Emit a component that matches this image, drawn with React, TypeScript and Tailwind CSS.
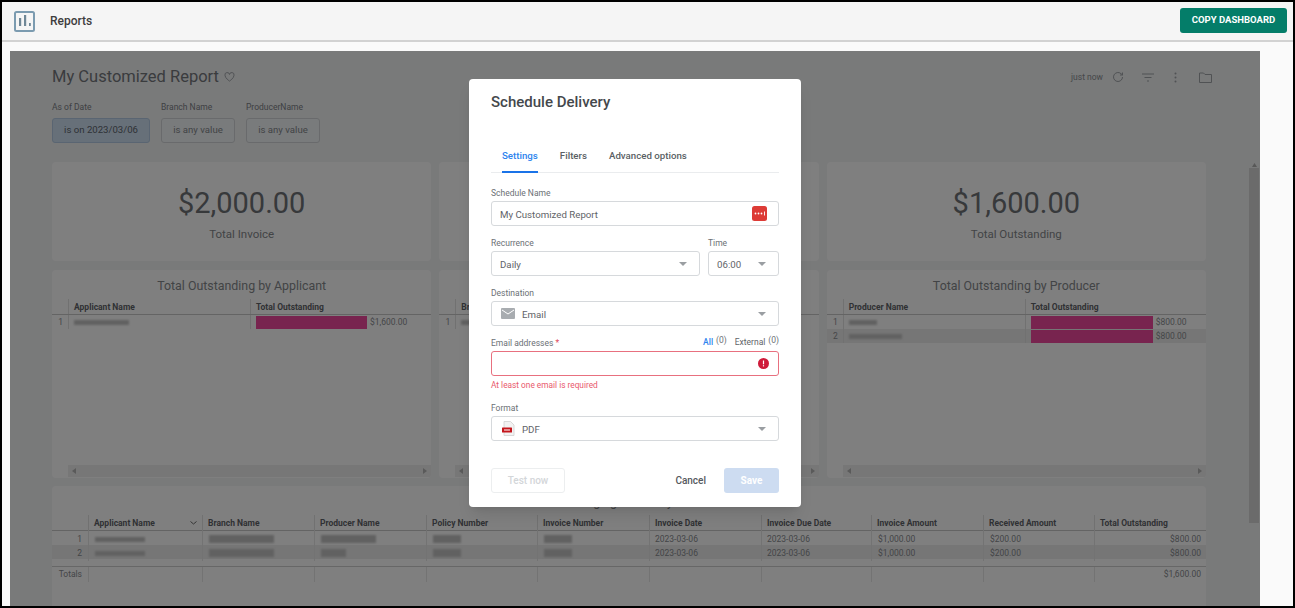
import React from "react";

const Caret = ({ className = "" }: { className?: string }) => (
  <svg width="8" height="4" viewBox="0 0 8 4" className={className}>
    <path d="M0 0h8L4 4z" fill="#9a9ea2" />
  </svg>
);

const Redacted = ({ w, h = 7 }: { w: number; h?: number }) => (
  <div className="bg-[#c2c2c2] blur-[1px]" style={{ width: w, height: h }} />
);

const Filter = ({ label, value, active, w }: { label: string; value: string; active?: boolean; w: number }) => (
  <div className="flex flex-col" style={{ width: w }}>
    <div className="h-[16px] text-[8.5px] leading-[16px] text-[#7d8186]">{label}</div>
    <div
      className={`mt-[3px] flex h-[25px] items-center justify-center rounded-[3px] border text-[9.6px] ${
        active ? "border-[#b4cbe4] bg-[#cfe0f2] text-[#5d656e]" : "border-[#d2d5d8] bg-[#f3f6f8] text-[#84888d]"
      }`}
    >
      {value}
    </div>
  </div>
);

const KpiCard = ({ value, label }: { value?: string; label?: string }) => (
  <div className="flex h-[99px] flex-col items-center rounded-[4px] bg-white pt-[22px]">
    {value && <div className="text-[29px] leading-[38px] text-[#6f7277]">{value}</div>}
    {label && <div className="mt-[5px] text-[11.5px] leading-[14px] text-[#85888c]">{label}</div>}
  </div>
);

const ChartCard = ({
  title,
  col1,
  rows,
}: {
  title?: string;
  col1: string;
  rows: { w: number; bar: number; value: string }[];
}) => (
  <div className="flex h-[208px] flex-col overflow-hidden rounded-[4px] bg-white">
    <div className="h-[24px] pt-[8px] text-center text-[12.4px] leading-[16px] text-[#85888c]">{title}</div>
    <div className="mt-[5px] flex h-[16px] border-b border-[#c9c9c9] text-[8.5px] font-bold leading-[16px] text-[#5f6368]">
      <div className="w-[16px]" />
      <div className="w-[182px] border-l border-[#e2e2e2] pl-[5px]">{col1}</div>
      <div className="flex-1 border-l border-[#e2e2e2] pl-[5px]">Total Outstanding</div>
    </div>
    {rows.map((r, i) => (
      <div key={i} className={`flex h-[14px] items-center text-[8.5px] text-[#8b8e92] ${i % 2 ? "bg-[#ececec]" : ""}`}>
        <div className="w-[16px] pr-[5px] text-right">{i + 1}</div>
        <div className="flex h-full w-[182px] items-center border-l border-[#e2e2e2] pl-[5px]">
          <Redacted w={r.w} h={5} />
        </div>
        <div className="flex h-full flex-1 items-center border-l border-[#e2e2e2] pl-[5px]">
          <div className="h-[13px] bg-[#f0489f]" style={{ width: r.bar }} />
          <span className="ml-[3px]">{r.value}</span>
        </div>
      </div>
    ))}
    <div className="flex-1" />
    <div className="ml-[16px] mb-[1px] flex h-[12px] items-center justify-between bg-[#eeeeee] px-[4px]">
      <svg width="4" height="6" viewBox="0 0 4 6"><path d="M4 0v6L0 3z" fill="#b5b5b5" /></svg>
      <svg width="4" height="6" viewBox="0 0 4 6"><path d="M0 0v6l4-3z" fill="#b5b5b5" /></svg>
    </div>
  </div>
);

const tableHeaders = [
  "Applicant Name",
  "Branch Name",
  "Producer Name",
  "Policy Number",
  "Invoice Number",
  "Invoice Date",
  "Invoice Due Date",
  "Invoice Amount",
  "Received Amount",
  "Total Outstanding",
];
const gridCols = "grid grid-cols-[36px_114px_112px_112px_111px_112px_112px_110px_112px_111px_112px]";

const blur1 = [50, 65, 55, 28, 28];
const blur2 = [50, 65, 25, 28, 28];

const DataRow = ({ n, blur, stripe }: { n: number; blur: number[]; stripe?: boolean }) => (
  <div className={`${gridCols} h-[14px] text-[8.5px] leading-[16px] text-[#888b8f] ${stripe ? "bg-[#ececec]" : ""}`}>
    <div className="pr-[6px] text-right">{n}</div>
    {blur.map((w, i) => (
      <div key={i} className="flex items-center border-l border-[#e6e6e6] pl-[6px]">
        <Redacted w={w} h={i === 0 ? 5 : 8} />
      </div>
    ))}
    <div className="border-l border-[#e6e6e6] pl-[5px]">2023-03-06</div>
    <div className="border-l border-[#e6e6e6] pl-[5px]">2023-03-06</div>
    <div className="border-l border-[#e6e6e6] pl-[6px]">$1,000.00</div>
    <div className="border-l border-[#e6e6e6] pl-[6px]">$200.00</div>
    <div className="border-l border-[#e6e6e6] pr-[5px] text-right">$800.00</div>
  </div>
);

const Field = ({ label, children, right }: { label: React.ReactNode; children: React.ReactNode; right?: React.ReactNode }) => (
  <div>
    <div className="flex h-[17px] items-center justify-between pt-[1px] text-[8.5px] text-[#6b7075]">
      <span>{label}</span>
      {right}
    </div>
    {children}
  </div>
);

const inputBox = "flex h-[25px] items-center rounded-[3px] border border-[#d6d9dc] bg-white text-[9.7px] leading-[13px] text-[#5f6368]";

export default function App() {
  return (
    <div
      className="relative flex h-[608px] w-[1295px] flex-col overflow-hidden border-2 border-black bg-[#fafafa]"
      style={{ fontFamily: "Roboto, 'Liberation Sans', sans-serif" }}
    >
      <header className="flex h-[40px] shrink-0 items-center justify-between border-b-2 border-[#d2d2d2] bg-[#f5f5f5] pl-[12px] pr-[6px]">
        <div className="flex items-center">
          <svg width="21" height="21" viewBox="0 0 21 21">
            <rect x="1" y="1" width="19" height="19" rx="1.500" fill="none" stroke="#7b9bb0" strokeWidth="2" />
            <rect x="5" y="7" width="2.200" height="8" fill="#6f8796" />
            <rect x="10" y="4" width="2.200" height="11" fill="#6f8796" />
            <rect x="15" y="12" width="1.800" height="3" fill="#6f8796" />
          </svg>
          <span className="ml-[15px] text-[12px] font-medium text-[#3d3d3d]">Reports</span>
        </div>
        <button className="mt-[-1px] h-[25px] w-[107px] rounded-[3px] bg-[#047d69] text-[9.5px] font-bold text-white">
          COPY DASHBOARD
        </button>
      </header>

      <div className="min-h-0 flex-1 pl-[8px] pr-[33px] pt-[9px]">
        <div className="relative flex h-full overflow-hidden bg-[#f2f4f5]">
          <main className="min-w-0 flex-1 pl-[42px] pr-[43px]">
            <div className="flex h-[48px] items-center justify-between pt-[4px]">
              <div className="flex items-center">
                <span className="text-[16.500px] text-[#75787d]">My Customized Report</span>
                <svg width="11" height="10" viewBox="0 0 24 22" className="ml-[5px]" fill="none" stroke="#9a9ea2" strokeWidth="2">
                  <path d="M12 20S2 13.500 2 7a5 5 0 0 1 10-1.500A5 5 0 0 1 22 7c0 6.500-10 13-10 13z" />
                </svg>
              </div>
              <div className="-mr-[6px] flex items-center text-[#8b8f93]">
                <span className="text-[8.5px]">just now</span>
                <svg width="12" height="12" viewBox="0 0 24 24" fill="none" stroke="#a0a4a8" strokeWidth="2" className="ml-[9px]">
                  <path d="M21 12a9 9 0 1 1-3-6.700L21 8" />
                  <path d="M21 3v5h-5" />
                </svg>
                <svg width="12" height="9" viewBox="0 0 12 9" className="ml-[18px]" stroke="#a0a4a8" strokeWidth="1">
                  <path d="M0 1h12M2.500 4.500h7M5 8h2" />
                </svg>
                <svg width="3" height="11" viewBox="0 0 3 11" className="ml-[20px]" fill="#a0a4a8">
                  <circle cx="1.500" cy="1.500" r="1" />
                  <circle cx="1.500" cy="5.500" r="1" />
                  <circle cx="1.500" cy="9.500" r="1" />
                </svg>
                <svg width="13" height="11" viewBox="0 0 13 11" className="ml-[22px]" fill="none" stroke="#a0a4a8">
                  <path d="M.500 1h4l1.500 1.500h6.500v8H.500z" />
                </svg>
              </div>
            </div>
            <div className="flex gap-[11px]">
              <Filter label="As of Date" value="is on 2023/03/06" active w={98} />
              <Filter label="Branch Name" value="is any value" w={74} />
              <Filter label="ProducerName" value="is any value" w={74} />
            </div>

            <div className="mt-[19px] grid grid-cols-3 gap-x-[8px] gap-y-[9px]">
              <KpiCard value="$2,000.00" label="Total Invoice" />
              <KpiCard />
              <KpiCard value="$1,600.00" label="Total Outstanding" />
              <ChartCard
                title="Total Outstanding by Applicant"
                col1="Applicant Name"
                rows={[{ w: 55, bar: 111, value: "$1,600.00" }]}
              />
              <ChartCard col1="Branch Name" rows={[{ w: 55, bar: 111, value: "$1,600.00" }]} />
              <ChartCard
                title="Total Outstanding by Producer"
                col1="Producer Name"
                rows={[
                  { w: 28, bar: 122, value: "$800.00" },
                  { w: 53, bar: 122, value: "$800.00" },
                ]}
              />
            </div>

            <div className="mt-[8px] h-[120px] rounded-t-[4px] bg-white">
              <div className="h-[29px] pt-[8px] text-center text-[12.400px] leading-[16px] text-[#85888c]">Aging Summary</div>
              <div className={`${gridCols} h-[16px] border-b border-[#c9c9c9] text-[8.5px] font-bold leading-[16px] text-[#5f6368]`}>
                <div />
                {tableHeaders.map((h, i) => (
                  <div key={h} className="flex items-center justify-between border-l border-[#e2e2e2] pl-[5px] pr-[5px]">
                    <span>{h}</span>
                    {i === 0 && (
                      <svg width="7" height="4" viewBox="0 0 7 4" fill="none" stroke="#6b6b6b">
                        <path d="M.5.500l3 2.500 3-2.500" />
                      </svg>
                    )}
                  </div>
                ))}
              </div>
              <DataRow n={1} blur={blur1} />
              <DataRow n={2} blur={blur2} stripe />
              <div className="h-[7px]" />
              <div className={`${gridCols} h-[14px] border-t border-[#cfcfcf] text-[8.5px] leading-[15px] text-[#888b8f]`}>
                <div className="pr-[6px] text-right">Totals</div>
                {Array.from({ length: 9 }).map((_, i) => (
                  <div key={i} className="border-l border-[#e6e6e6]" />
                ))}
                <div className="border-l border-[#e6e6e6] pr-[5px] text-right">$1,600.00</div>
              </div>
            </div>
          </main>

          <aside className="mr-[1px] mt-[111px] flex w-[10px] shrink-0 flex-col items-center">
            <svg width="5" height="4" viewBox="0 0 5 4" className="mt-[1px]"><path d="M0 4h5L2.500 0z" fill="#b0b0b0" /></svg>
            <div className="mt-[1px] h-[355px] w-full bg-[#d6d6d6]" />
          </aside>

          <div className="absolute inset-0 flex justify-center bg-black/50 pt-[28px]">
            <div className="h-[428px] w-[332px] rounded-[4px] bg-white px-[22px] pt-[12px] shadow-lg">
              <h2 className="text-[15px] font-medium leading-[22px] text-[#44484c]">Schedule Delivery</h2>
              <div className="mt-[27px] flex h-[33px] border-b border-[#eaecee] text-[9.7px] font-medium text-[#5a5f64]">
                <div className="mx-[11px] h-[33px] border-b-2 border-[#1a73e8] pt-[9px] leading-[14px] text-[#2e84ee]">Settings</div>
                <div className="mx-[11px] pt-[9px] leading-[14px]">Filters</div>
                <div className="mx-[11px] pt-[9px] leading-[14px]">Advanced options</div>
              </div>

              <div className="mt-[11px] flex flex-col gap-[8px]">
                <Field label="Schedule Name">
                  <div className={`${inputBox} justify-between pl-[8px] pr-[11px]`}>
                    <span className="pt-[1px]">My Customized Report</span>
                    <svg width="15" height="15" viewBox="0 0 15 15">
                      <rect width="15" height="15" rx="2.500" fill="#dd3b36" />
                      <circle cx="3.500" cy="7.500" r="0.900" fill="#fff" />
                      <circle cx="6.500" cy="7.500" r="0.900" fill="#fff" />
                      <circle cx="9.500" cy="7.500" r="0.900" fill="#fff" />
                      <rect x="12" y="5.500" width="0.900" height="4" fill="#fff" />
                    </svg>
                  </div>
                </Field>
                <div className="flex gap-[8px]">
                  <div className="flex-1">
                    <Field label="Recurrence">
                      <div className={`${inputBox} justify-between pl-[8px] pr-[12px]`}>
                        <span className="pt-[1px]">Daily</span>
                        <Caret />
                      </div>
                    </Field>
                  </div>
                  <div className="w-[71px]">
                    <Field label="Time">
                      <div className={`${inputBox} justify-between pl-[8px] pr-[12px]`}>
                        <span className="pt-[1px]">06:00</span>
                        <Caret />
                      </div>
                    </Field>
                  </div>
                </div>
                <Field label="Destination">
                  <div className={`${inputBox} justify-between pl-[9px] pr-[12px]`}>
                    <div className="flex items-center">
                      <svg width="14" height="11" viewBox="0 0 14 11">
                        <rect width="14" height="11" rx="1" fill="#a8acb0" />
                        <path d="M1 2l6 4 6-4" fill="none" stroke="#fff" strokeWidth="1" />
                      </svg>
                      <span className="ml-[7px] pt-[1px]">Email</span>
                    </div>
                    <Caret />
                  </div>
                </Field>
                <div>
                  <Field
                    label={
                      <>
                        Email addresses <span className="text-[#e0475c]">*</span>
                      </>
                    }
                    right={
                      <span className="mb-[2px] flex items-center text-[8.5px]">
                        <span className="font-medium text-[#2e84ee]">All</span>
                        <span className="mb-[3px] ml-[3px] text-[#6b7075]">(0)</span>
                        <span className="ml-[8px] text-[#5f6368]">External</span>
                        <span className="mb-[3px] ml-[3px] text-[#6b7075]">(0)</span>
                      </span>
                    }
                  >
                    <div className="flex h-[25px] items-center justify-end rounded-[3px] border border-[#e8707f] bg-white pr-[9px]">
                      <svg width="11" height="11" viewBox="0 0 11 11">
                        <circle cx="5.500" cy="5.500" r="5.500" fill="#cf1b3a" />
                        <rect x="4.900" y="2.500" width="1.200" height="3.800" fill="#fff" />
                        <rect x="4.900" y="7.200" width="1.200" height="1.200" fill="#fff" />
                      </svg>
                    </div>
                  </Field>
                  <div className="mb-[-3px] h-[18px] text-[8.3px] leading-[18px] text-[#e9586c]">At least one email is required</div>
                </div>
                <Field label="Format">
                  <div className={`${inputBox} justify-between pl-[9px] pr-[12px]`}>
                    <div className="flex items-center">
                      <svg width="14" height="15" viewBox="0 0 14 15">
                        <path d="M3 .500h6.500l3.500 3.500v10.500H3z" fill="#f2f2f2" stroke="#d0d0d0" strokeWidth="0.800" />
                        <rect x="1" y="6.500" width="10" height="5" rx="0.500" fill="#c4161c" />
                        <rect x="3" y="8.500" width="6" height="1" fill="#fff" />
                      </svg>
                      <span className="ml-[7px] pt-[1px]">PDF</span>
                    </div>
                    <Caret />
                  </div>
                </Field>
              </div>

              <div className="mt-[27px] flex h-[25px] items-center text-[10px] font-medium">
                <div className="flex h-[25px] w-[74px] items-center justify-center rounded-[3px] border border-[#eceeef] text-[#d3d6d9]">Test now</div>
                <div className="ml-auto text-[#55595e]">Cancel</div>
                <div className="ml-[18px] flex h-[25px] w-[55px] items-center justify-center rounded-[3px] bg-[#cddcf1] font-bold text-white">Save</div>
              </div>
            </div>
          </div>
        </div>
      </div>
    </div>
  );
}
